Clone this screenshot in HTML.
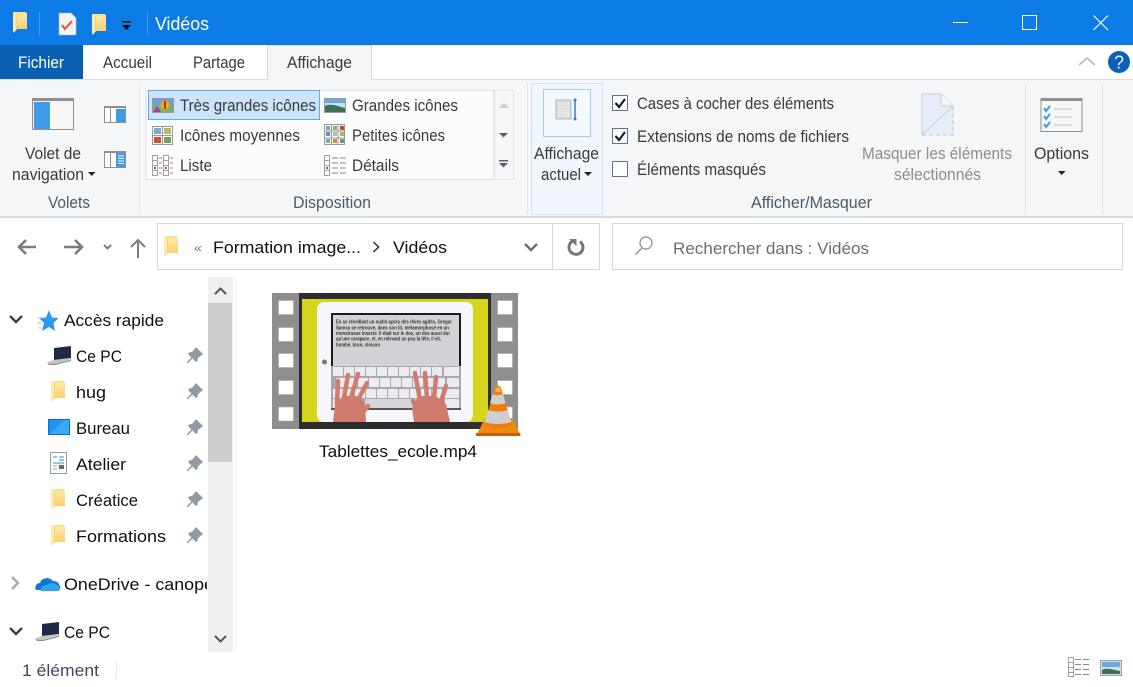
<!DOCTYPE html>
<html lang="fr"><head><meta charset="utf-8"><title>Vidéos</title>
<style>
html,body{margin:0;padding:0;background:#fff;width:1133px;height:687px;overflow:hidden}
svg{display:block}
text{font-family:"Liberation Sans",sans-serif;font-size:16.5px;fill:#3a3a3a}
.n{fill:#101010;font-size:17px}
.h{fill:#4e5a66}
.g{fill:#8d8d8d}
.s{font-size:5.2px;font-weight:bold;fill:#333}
</style></head><body>
<svg width="1133" height="687" viewBox="0 0 1133 687" xmlns="http://www.w3.org/2000/svg">
<defs>
<linearGradient id="fg" x1="0" y1="0" x2="0" y2="1"><stop offset="0" stop-color="#ffe9a6"/><stop offset="1" stop-color="#f8d070"/></linearGradient>
<symbol id="folder" viewBox="0 0 14 21">
<path d="M0 0h13v1h1v16H4l-3 3.500-1-1z" fill="#fbdf8a"/>
<path d="M4 2h10v15H4z" fill="url(#fg)"/>
<path d="M0 0h4v17l-3 3.500-1-1z" fill="#fdeaaa"/>
<path d="M3.500 1v17" stroke="#eec765" stroke-width=".7"/>
</symbol>
<symbol id="pin" viewBox="0 0 16 16">
<path d="M9 0L16 7L14 8.500L11 11L10.500 14L9 15L5.500 11.500L1 16L0 16L0 15L4.500 10.500L1 7L2 5.500L5 5L7.500 2z" fill="#8f9aa3"/>
</symbol>
<symbol id="laptop" viewBox="0 0 24 19">
<path d="M7 2l17-2v12L7 14z" fill="#1c2a44"/>
<path d="M7 14l17-2v2L8 18H3L0 16.500z" fill="#c4c4c4"/>
<path d="M0 16.500L3 18h5l16-4v1L8 19H2z" fill="#8a8a8a"/>
</symbol>
</defs>

<!-- title bar -->
<rect width="1133" height="45" fill="#0d7be6"/>
<use href="#folder" x="13" y="12" width="14" height="21"/>
<rect x="39" y="12" width="1" height="23" fill="#4a9aec"/>
<path d="M59 13h12l5 5v17H59z" fill="#f3f3f3" stroke="#b9b9b9" stroke-width=".6"/>
<path d="M62 25l3 4 7-8" fill="none" stroke="#e8552a" stroke-width="2"/>
<use href="#folder" x="92" y="14" width="14" height="21"/>
<rect x="122" y="21" width="9" height="1.500" fill="#111"/>
<path d="M122 25h9l-4.500 5z" fill="#111"/>
<rect x="147" y="12" width="1" height="23" fill="#4a9aec"/>
<text x="155" y="30" textLength="54" lengthAdjust="spacingAndGlyphs" style="font-size:18px;fill:#fff">Vidéos</text>
<rect x="953" y="22" width="15" height="1" fill="#fff"/>
<rect x="1022.500" y="15.500" width="14" height="14" fill="none" stroke="#fff"/>
<path d="M1093.500 15.500l14.500 14.500M1108 15.500l-14.500 14.500" stroke="#fff" stroke-width="1.100" fill="none"/>

<!-- tab strip -->
<rect y="45" width="1133" height="34" fill="#fff"/>
<rect y="45" width="83" height="34" fill="#0a60b2"/>
<text x="18" y="68" textLength="46" lengthAdjust="spacingAndGlyphs" style="fill:#fff">Fichier</text>
<text x="103" y="68" textLength="49" lengthAdjust="spacingAndGlyphs">Accueil</text>
<text x="193" y="68" textLength="52" lengthAdjust="spacingAndGlyphs">Partage</text>
<rect y="79" width="1133" height="1" fill="#dadbdc"/>
<path d="M267.500 80V45.500h104V80" fill="#f5f6f7" stroke="#dadbdc"/>
<rect x="268" y="78" width="103" height="3" fill="#f5f6f7"/>
<text x="287" y="68" textLength="65" lengthAdjust="spacingAndGlyphs">Affichage</text>
<path d="M1079 65l8-7 8 7" fill="none" stroke="#b5b5b5" stroke-width="1.500"/>
<circle cx="1119" cy="62" r="11" fill="#0a62b8"/>
<text x="1114" y="68.500" textLength="10" lengthAdjust="spacingAndGlyphs" style="font-size:18px;fill:#e8f1fa">?</text>

<!-- ribbon -->
<rect y="80" width="1133" height="136" fill="#f5f6f7"/>
<rect y="216" width="1133" height="2" fill="#dadbdc"/>
<rect x="139" y="83" width="1" height="131" fill="#e2e3e4"/>
<rect x="527" y="83" width="1" height="131" fill="#e2e3e4"/>
<rect x="1025" y="83" width="1" height="131" fill="#e2e3e4"/>
<rect x="1102" y="83" width="1" height="131" fill="#e2e3e4"/>

<!-- volets -->
<rect x="32.500" y="98.500" width="41" height="31" fill="#f6f6f6" stroke="#8f8f8f"/>
<rect x="32" y="98" width="42" height="3" fill="#8f8f8f"/>
<rect x="34" y="102" width="16" height="27" fill="#3f9be6"/>
<rect x="104.500" y="106.500" width="21" height="16" fill="#fff" stroke="#8f8f8f"/>
<rect x="104" y="106" width="22" height="2" fill="#8f8f8f"/>
<rect x="116" y="109" width="9" height="13" fill="#3f9be6"/>
<rect x="110" y="108" width="1" height="15" fill="#8f8f8f"/>
<rect x="104.500" y="151.500" width="21" height="16" fill="#fff" stroke="#8f8f8f"/>
<rect x="104" y="151" width="22" height="2" fill="#8f8f8f"/>
<rect x="116" y="153" width="9" height="14" fill="#3f9be6"/>
<path d="M118 156h6M118 158.500h6M118 161h6M118 163.500h6" stroke="#fff"/>
<rect x="110" y="153" width="1" height="15" fill="#8f8f8f"/>
<text x="25" y="159" textLength="56" lengthAdjust="spacingAndGlyphs">Volet de</text>
<text x="12" y="180" textLength="72" lengthAdjust="spacingAndGlyphs">navigation</text>
<path d="M88 172h7.500l-3.750 4z" fill="#222"/>
<text x="48" y="208" textLength="42" lengthAdjust="spacingAndGlyphs" class="h">Volets</text>

<!-- gallery -->
<rect x="146" y="90.500" width="348" height="89" fill="#fbfcfe" stroke="#dcdddf"/>
<rect x="494.500" y="90.500" width="19" height="89" fill="#f5f6f7" stroke="#e4e5e6"/>
<path d="M499 108l5-5 5 5z" fill="#c9ccd0"/>
<path d="M499 133h9l-4.500 4.500z" fill="#59606b"/>
<rect x="499" y="160" width="9" height="1.500" fill="#59606b"/>
<path d="M499 163h9l-4.500 4.500z" fill="#59606b"/>
<rect x="148.500" y="90.500" width="171" height="29" fill="#cce4f9" stroke="#66a7e8"/>
<text x="180" y="111" textLength="136" lengthAdjust="spacingAndGlyphs">Très grandes icônes</text>
<text x="352" y="111" textLength="106" lengthAdjust="spacingAndGlyphs">Grandes icônes</text>
<text x="180" y="141" textLength="120" lengthAdjust="spacingAndGlyphs">Icônes moyennes</text>
<text x="352" y="141" textLength="93" lengthAdjust="spacingAndGlyphs">Petites icônes</text>
<text x="180" y="171" textLength="32" lengthAdjust="spacingAndGlyphs">Liste</text>
<text x="352" y="171" textLength="47" lengthAdjust="spacingAndGlyphs">Détails</text>
<!-- tres grandes -->
<rect x="152.500" y="98.500" width="21" height="14" fill="#7cae6a" stroke="#999"/>
<rect x="153" y="99" width="20" height="6" fill="#6da0d8"/>
<circle cx="165" cy="105" r="4.500" fill="#e8b020"/>
<rect x="164" y="101" width="2" height="8" fill="#c03020"/>
<path d="M153 112l4-6 4 6z" fill="#a040a0"/>
<!-- grandes -->
<rect x="324.500" y="98.500" width="21" height="14" fill="#cfe0e8" stroke="#999"/>
<path d="M325 106c6-3 12 0 20 2v4h-20z" fill="#3d7055"/>
<rect x="325" y="99" width="20" height="4" fill="#6ea9dd"/>
<!-- moyennes -->
<rect x="152.500" y="126.500" width="20" height="18" fill="#fff" stroke="#999"/>
<rect x="154" y="128" width="7" height="6" fill="#7aa8c8"/><rect x="164" y="128" width="7" height="6" fill="#b8b860"/>
<rect x="154" y="137" width="7" height="6" fill="#d05030"/><rect x="164" y="137" width="7" height="6" fill="#7aa060"/>
<path d="M152 135.500h21M162.500 127v17" stroke="#999"/>
<!-- petites -->
<rect x="324.500" y="124.500" width="20" height="20" fill="#fff" stroke="#999"/>
<path d="M331.500 125v19M338 125v19M325 131h19M325 138h19" stroke="#999"/>
<rect x="326" y="126" width="4" height="4" fill="#7fa7c4"/><rect x="333" y="126" width="4" height="4" fill="#9ab060"/><rect x="340" y="126" width="4" height="4" fill="#c84828"/>
<rect x="326" y="132" width="4" height="4" fill="#6a90c0"/><rect x="333" y="132" width="4" height="4" fill="#9fc0d8"/><rect x="340" y="132" width="4" height="4" fill="#a8b860"/>
<rect x="326" y="139" width="4" height="4" fill="#7fa7c4"/><rect x="333" y="139" width="4" height="4" fill="#d09030"/><rect x="340" y="139" width="4" height="4" fill="#6a90a0"/>
<!-- liste -->
<g stroke="#a0a0a0" fill="#fff">
<rect x="152.500" y="155.500" width="5" height="5"/><rect x="152.500" y="160.500" width="5" height="5"/><rect x="152.500" y="165.500" width="5" height="5"/><rect x="152.500" y="170.500" width="5" height="5"/>
<rect x="163.500" y="155.500" width="5" height="5"/><rect x="163.500" y="160.500" width="5" height="5"/><rect x="163.500" y="165.500" width="5" height="5"/><rect x="163.500" y="170.500" width="5" height="5"/>
<rect x="324.500" y="155.500" width="5" height="5"/><rect x="324.500" y="160.500" width="5" height="5"/><rect x="324.500" y="165.500" width="5" height="5"/><rect x="324.500" y="170.500" width="5" height="5"/>
</g>
<path d="M159 158h3M159 163h3M159 168h3M159 173h3M170 158h3M170 163h3M170 168h3M170 173h3" stroke="#888"/>
<path d="M332 158h6M340 158h6M332 163h6M340 163h6M332 168h6M340 168h6M332 173h6M340 173h6" stroke="#888"/>
<g fill="#c8402a"><rect x="154" y="167" width="2" height="2"/><rect x="165" y="167" width="2" height="2"/><rect x="326" y="167" width="2" height="2"/></g>
<text x="293" y="208" textLength="78" lengthAdjust="spacingAndGlyphs" class="h">Disposition</text>

<!-- affichage actuel -->
<rect x="531.500" y="83.500" width="71" height="131" fill="#f0f6fb" stroke="#cfe4f6"/>
<rect x="543.500" y="89.500" width="47" height="47" fill="#f4f9fd" stroke="#9fd0f5"/>
<rect x="556" y="100" width="15" height="19" fill="#d9dde0" stroke="#aaa" stroke-width=".8"/>
<path d="M558 104h11M558 107h11M558 110h11M558 113h11M558 116h11" stroke="#f5f5f5" stroke-dasharray="2 1"/>
<path d="M575 100v19" stroke="#2f7fc4" stroke-width="1.500"/>
<circle cx="575" cy="100" r="1.500" fill="#2f7fc4"/><circle cx="575" cy="119" r="1.500" fill="#2f7fc4"/>
<text x="534" y="159" textLength="65" lengthAdjust="spacingAndGlyphs">Affichage</text>
<text x="541" y="180" textLength="40" lengthAdjust="spacingAndGlyphs">actuel</text>
<path d="M584 172h8l-4 4z" fill="#222"/>

<!-- checkboxes -->
<g fill="#fff" stroke="#5f7390"><rect x="612.500" y="95.500" width="15" height="15"/><rect x="612.500" y="128.500" width="15" height="15"/><rect x="612.500" y="161.500" width="15" height="15"/></g>
<path d="M615.500 103l3.500 4 6-8M615.500 136l3.500 4 6-8" fill="none" stroke="#1d1d1d" stroke-width="2.200"/>
<text x="637" y="109" textLength="197" lengthAdjust="spacingAndGlyphs">Cases à cocher des éléments</text>
<text x="637" y="142" textLength="212" lengthAdjust="spacingAndGlyphs">Extensions de noms de fichiers</text>
<text x="637" y="175" textLength="129" lengthAdjust="spacingAndGlyphs">Éléments masqués</text>

<path d="M922 94h19l12 12v29h-31z" fill="#e7eef9"/>
<path d="M922 135V94h19l12 12" fill="none" stroke="#c3cedd"/>
<path d="M922 135l31-29" stroke="#c3cedd" fill="none"/>
<path d="M953 106v29h-31" fill="none" stroke="#bcc4cf" stroke-dasharray="4 3"/>
<path d="M941 94v12h12" fill="#f5f6f7" stroke="#c3cedd"/>
<text x="862" y="159" textLength="150" lengthAdjust="spacingAndGlyphs" class="g">Masquer les éléments</text>
<text x="894" y="180" textLength="87" lengthAdjust="spacingAndGlyphs" class="g">sélectionnés</text>
<text x="751" y="208" textLength="121" lengthAdjust="spacingAndGlyphs" class="h">Afficher/Masquer</text>

<rect x="1041" y="98.500" width="41" height="33" fill="#f7f7f7" stroke="#8f8f8f"/>
<rect x="1041" y="98" width="41" height="3" fill="#8f8f8f"/>
<g fill="none" stroke="#3f9be6" stroke-width="2"><path d="M1044 108l2 3 4-5M1044 116l2 3 4-5M1044 124l2 3 4-5"/></g>
<path d="M1054 109h18M1054 117h18M1054 125h18" stroke="#c2c2c2"/>
<text x="1034" y="159" textLength="55" lengthAdjust="spacingAndGlyphs">Options</text>
<path d="M1058 171h7.500l-3.750 4z" fill="#222"/>

<!-- nav bar -->
<path d="M36 247H20M26 240l-7 7 7 7" fill="none" stroke="#7c7c7c" stroke-width="2.600"/>
<path d="M64 247h18M75 240l7 7-7 7" fill="none" stroke="#7c7c7c" stroke-width="2.600"/>
<path d="M104 245l3.500 3.500 3.500-3.500" fill="none" stroke="#7c7c7c" stroke-width="2"/>
<path d="M138 258V240M131 247l7-7 7 7" fill="none" stroke="#7c7c7c" stroke-width="2"/>
<rect x="157.500" y="223.500" width="442" height="46" fill="#fff" stroke="#d9d9d9"/>
<rect x="552" y="224" width="1" height="45" fill="#d9d9d9"/>
<use href="#folder" x="164" y="236" width="14" height="21"/>
<text x="194" y="252" textLength="8" lengthAdjust="spacingAndGlyphs" style="font-size:12px;fill:#777">«</text>
<text x="213" y="253" textLength="148" lengthAdjust="spacingAndGlyphs" class="n">Formation image...</text>
<path d="M373.500 242l5 5-5 5" fill="none" stroke="#333" stroke-width="1.500"/>
<text x="393" y="253" textLength="54" lengthAdjust="spacingAndGlyphs" class="n">Vidéos</text>
<path d="M525 244l6 6 6-6" fill="none" stroke="#6d6d6d" stroke-width="2.400"/>
<path d="M573 241a7 7 0 1 0 7 .6" fill="none" stroke="#777" stroke-width="3"/>
<path d="M569 239h7.500v7z" fill="#777"/>
<rect x="612.500" y="223.500" width="510" height="46" fill="#fff" stroke="#d9d9d9"/>
<circle cx="646" cy="243" r="6" fill="none" stroke="#888" stroke-width="1.200"/>
<path d="M642 248l-6.500 6.500" stroke="#c9885a" stroke-width="1.500"/>
<text x="673" y="254" textLength="196" lengthAdjust="spacingAndGlyphs" style="fill:#6d6d6d">Rechercher dans : Vidéos</text>

<!-- sidebar -->
<path d="M10 316l6 6 6-6" fill="none" stroke="#3f3f3f" stroke-width="2.400"/>
<path d="M49 310l3 7.500 6.500.5-5 5 1.500 8-6-4-7 4 2-8-5-5 7-.5z" fill="#2a9bf0"/>
<path d="M38 318h5M37 323h4M39 328h3" stroke="#8cc8f5"/>
<text x="64" y="326" textLength="100" lengthAdjust="spacingAndGlyphs" class="n">Accès rapide</text>
<use href="#laptop" x="47" y="346" width="24" height="19"/>
<text x="76" y="362" textLength="46" lengthAdjust="spacingAndGlyphs" class="n">Ce PC</text>
<use href="#folder" x="51" y="381" width="14" height="21"/>
<text x="76" y="398" textLength="30" lengthAdjust="spacingAndGlyphs" class="n">hug</text>
<rect x="48.500" y="419.500" width="21" height="15" fill="#1e95f2" stroke="#0a6dc4"/>
<path d="M50 434l14-14h5v14z" fill="#3aa8f8"/>
<text x="76" y="434" textLength="54" lengthAdjust="spacingAndGlyphs" class="n">Bureau</text>
<rect x="50.500" y="452.500" width="16" height="21" fill="#fff" stroke="#999"/>
<path d="M53 457h4M59 457h5M59 460h5M53 463h11" stroke="#3a87d0"/>
<rect x="59" y="465" width="5" height="4" fill="#557088"/>
<path d="M53 466h4M53 469h4" stroke="#999"/>
<text x="76" y="470" textLength="50" lengthAdjust="spacingAndGlyphs" class="n">Atelier</text>
<use href="#folder" x="51" y="489" width="14" height="21"/>
<text x="76" y="506" textLength="62" lengthAdjust="spacingAndGlyphs" class="n">Créatice</text>
<use href="#folder" x="51" y="525" width="14" height="21"/>
<text x="76" y="542" textLength="90" lengthAdjust="spacingAndGlyphs" class="n">Formations</text>
<use href="#pin" x="187" y="347" width="16" height="16"/>
<use href="#pin" x="187" y="383" width="16" height="16"/>
<use href="#pin" x="187" y="419" width="16" height="16"/>
<use href="#pin" x="187" y="455" width="16" height="16"/>
<use href="#pin" x="187" y="491" width="16" height="16"/>
<use href="#pin" x="187" y="527" width="16" height="16"/>
<path d="M12 577l6 6-6 6" fill="none" stroke="#a8a8a8" stroke-width="2.400"/>
<path d="M36 590c-2-4 1-7 4-7 1-5 9-7 13-2 4 0 6 2 6 4 2 1 2 5-1 5z" fill="#0f78d4"/>
<path d="M41 591c-1-3 2-6 6-6 3-3 8-2 10 0 2 0 3 2 2 6z" fill="#2ea3ec"/>
<svg x="64" y="570" width="143" height="30"><text x="0" y="20" textLength="150" lengthAdjust="spacingAndGlyphs" class="n">OneDrive - canope</text></svg>
<path d="M10 628l6 6 6-6" fill="none" stroke="#3f3f3f" stroke-width="2.400"/>
<use href="#laptop" x="35" y="622" width="24" height="19"/>
<text x="64" y="638" textLength="46" lengthAdjust="spacingAndGlyphs" class="n">Ce PC</text>

<rect x="208" y="277" width="25" height="375" fill="#efefef"/>
<rect x="208" y="303" width="24" height="159" fill="#cdcdcd"/>
<path d="M215 294l5.500-5.500 5.500 5.500" fill="none" stroke="#555" stroke-width="2"/>
<path d="M215 636l5.500 5.500 5.500-5.500" fill="none" stroke="#555" stroke-width="2"/>
<rect x="235" y="277" width="1" height="375" fill="#f3f3f3"/>

<!-- thumbnail -->
<rect x="272" y="293" width="246" height="136" fill="#8e8e8e"/>
<g fill="#fff" stroke="#a8a8a8" stroke-width=".6">
<rect x="278.500" y="300.500" width="15" height="14"/><rect x="278.500" y="327.500" width="15" height="14"/><rect x="278.500" y="353.500" width="15" height="14"/><rect x="278.500" y="380.500" width="15" height="14"/><rect x="278.500" y="407" width="15" height="14"/>
<rect x="497.500" y="300.500" width="15" height="14"/><rect x="497.500" y="327.500" width="15" height="14"/><rect x="497.500" y="353.500" width="15" height="14"/><rect x="497.500" y="380.500" width="15" height="14"/><rect x="497.500" y="407" width="15" height="14"/>
</g>
<rect x="299" y="293" width="192" height="136" fill="#2e2e2e"/>
<rect x="302" y="299" width="186" height="123" fill="#d6d51e"/>
<rect x="317" y="302" width="156" height="120" rx="7" fill="#f7f6fa"/>
<circle cx="324.500" cy="362" r="2.500" fill="#777"/>
<rect x="331" y="313" width="130" height="56" fill="#1c1c1c"/>
<rect x="333" y="315" width="126" height="54" fill="#d3d2d6"/>
<text class="s" x="336" y="323.500" textLength="116" lengthAdjust="spacingAndGlyphs">En se réveillant un matin après des rêves agités, Gregor</text>
<text class="s" x="336" y="329.500" textLength="113" lengthAdjust="spacingAndGlyphs">Samsa se retrouve, dans son lit, métamorphosé en un</text>
<text class="s" x="336" y="335" textLength="114" lengthAdjust="spacingAndGlyphs">monstrueux insecte. Il était sur le dos, un dos aussi dur</text>
<text class="s" x="336" y="340.500" textLength="105" lengthAdjust="spacingAndGlyphs">qu'une carapace, et, en relevant un peu la tête, il vit,</text>
<text class="s" x="336" y="346.500" textLength="44" lengthAdjust="spacingAndGlyphs">bombé, brun, cloison</text>
<!-- keyboard -->
<rect x="331" y="366" width="130" height="44" fill="#a9a9ae"/>
<rect x="331" y="408" width="130" height="2" fill="#55555a"/>
<g fill="#ececf0">
<rect x="333" y="367" width="10" height="9" rx="1"/><rect x="344" y="367" width="10" height="9" rx="1"/><rect x="355" y="367" width="10" height="9" rx="1"/><rect x="366" y="367" width="10" height="9" rx="1"/><rect x="377" y="367" width="10" height="9" rx="1"/><rect x="388" y="367" width="10" height="9" rx="1"/><rect x="399" y="367" width="10" height="9" rx="1"/><rect x="410" y="367" width="10" height="9" rx="1"/><rect x="421" y="367" width="10" height="9" rx="1"/><rect x="432" y="367" width="10" height="9" rx="1"/><rect x="444" y="367" width="15" height="9" rx="1"/>
<rect x="336" y="378" width="10" height="9" rx="1"/><rect x="347" y="378" width="10" height="9" rx="1"/><rect x="358" y="378" width="10" height="9" rx="1"/><rect x="369" y="378" width="10" height="9" rx="1"/><rect x="380" y="378" width="10" height="9" rx="1"/><rect x="391" y="378" width="10" height="9" rx="1"/><rect x="402" y="378" width="10" height="9" rx="1"/><rect x="413" y="378" width="10" height="9" rx="1"/><rect x="424" y="378" width="10" height="9" rx="1"/><rect x="435" y="378" width="10" height="9" rx="1"/><rect x="447" y="378" width="12" height="9" rx="1"/>
<rect x="333" y="389" width="10" height="9" rx="1"/><rect x="344" y="389" width="10" height="9" rx="1"/><rect x="355" y="389" width="10" height="9" rx="1"/><rect x="366" y="389" width="10" height="9" rx="1"/><rect x="377" y="389" width="10" height="9" rx="1"/><rect x="388" y="389" width="10" height="9" rx="1"/><rect x="399" y="389" width="10" height="9" rx="1"/><rect x="410" y="389" width="10" height="9" rx="1"/><rect x="421" y="389" width="10" height="9" rx="1"/><rect x="432" y="389" width="10" height="9" rx="1"/><rect x="444" y="389" width="15" height="9" rx="1"/>
<rect x="333" y="399" width="30" height="9" rx="1"/><rect x="365" y="399" width="78" height="9" rx="1" fill="#d5d5da"/><rect x="445" y="399" width="14" height="9" rx="1"/>
</g>
<!-- hands -->
<g fill="#cf7c6e">
<path d="M333 422l2-17 8-9 18 0 4 8 1 18z"/>
<path d="M414 422l-2-14 6-12 18 0 10 8 4 18z"/>
</g>
<g fill="none" stroke="#cf7c6e" stroke-width="4.500" stroke-linecap="round">
<path d="M337 404l1-23M344 398l4-23M351 398l7-24M358 400l9-17M363 412l5-6"/>
<path d="M420 400l-5-27M427 398l-2-25M434 398l2-21M441 402l5-16M416 408l-3-7"/>
</g>
<!-- VLC -->
<path d="M476 436l9-18h27l9 18z" fill="#ef8a12"/>
<path d="M476 433h44v3h-44z" fill="#c85f05"/>
<path d="M484 425l10-34c1-7 7-7 8 0l10 34c-6 4-22 4-28 0z" fill="#ee7d0c"/>
<path d="M492.500 394c2.500 1.500 8 1.500 10.500 0l2.500 9c-4 2-11.500 2-15.500 0z" fill="#cfcfcf"/>
<path d="M488 410c5 2 15 2 20 0l3.500 12c-6 2.500-21 2.500-27 0z" fill="#cfcfcf"/>
<path d="M496 388a3 2 0 0 1 4 0l1 4h-6z" fill="#ffb040"/>

<text x="319" y="457" textLength="158" lengthAdjust="spacingAndGlyphs" class="n">Tablettes_ecole.mp4</text>

<!-- status -->
<text x="22" y="676" textLength="77" lengthAdjust="spacingAndGlyphs" style="fill:#3e4a5c">1 élément</text>
<rect x="116" y="660" width="1" height="18" fill="#ececec"/>
<g fill="#fff" stroke="#a0a0a0"><rect x="1068.500" y="657.500" width="5" height="5"/><rect x="1068.500" y="662.500" width="5" height="5"/><rect x="1068.500" y="667.500" width="5" height="5"/><rect x="1068.500" y="672.500" width="5" height="4"/></g>
<path d="M1075 659.500h6M1083 659.500h6M1075 664.500h6M1083 664.500h6M1075 669.500h6M1083 669.500h6M1075 674.500h6M1083 674.500h6" stroke="#888"/>
<rect x="1100.500" y="660.500" width="21" height="15" fill="#cfe0e8" stroke="#a0a0a0"/>
<rect x="1102" y="662" width="18" height="5" fill="#6ea9dd"/>
<path d="M1102 670c5-3 11 0 18 1v3h-18z" fill="#3d7055"/>
</svg>
</body></html>
